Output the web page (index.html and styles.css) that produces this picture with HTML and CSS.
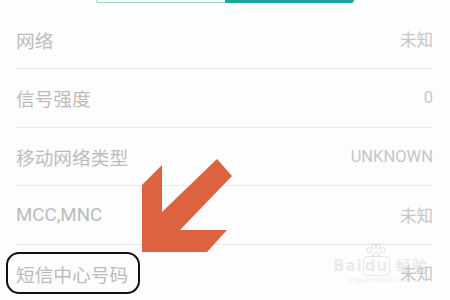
FILE: index.html
```html
<!DOCTYPE html>
<html lang="zh-CN">
<head>
<meta charset="utf-8">
<link rel="stylesheet" href="styles.css">
</head>
<body>
<div class="page">
  <div class="header">
    <div class="segment">
      <div class="seg seg-off"></div>
      <div class="seg seg-on"></div>
    </div>
  </div>
  <ul class="list">
    <li class="row"><span class="label">网络</span><span class="value">未知</span></li>
    <li class="row"><span class="label">信号强度</span><span class="value">0</span></li>
    <li class="row"><span class="label">移动网络类型</span><span class="value">UNKNOWN</span></li>
    <li class="row"><span class="label">MCC,MNC</span><span class="value">未知</span></li>
    <li class="row"><span class="label">短信中心号码</span><span class="value">未知</span></li>
  </ul>
  <svg class="arrow" width="450" height="300" viewBox="0 0 450 300">
    <polygon fill="#dc6240" points="217,159 232,176 180,230 227,230 207,252 142,252 142,185 162,165 162,212"/>
  </svg>
  <div class="circle-mark"></div>
  <div class="watermark">
    <svg class="wm-paw" width="22" height="14" viewBox="0 0 22 14">
      <g fill="none" stroke="rgba(190,190,190,0.45)" stroke-width="1">
        <ellipse cx="4" cy="7" rx="2" ry="2.5"/>
        <ellipse cx="8.5" cy="3" rx="2" ry="2.5"/>
        <ellipse cx="13.5" cy="3" rx="2" ry="2.5"/>
        <ellipse cx="18" cy="7" rx="2" ry="2.5"/>
        <path d="M7 13 Q11 6 15 13 Z"/>
      </g>
    </svg>
    <div class="wm-logo">Bai<span class="wm-du">du</span> 经验</div>
    <div class="wm-url">jingyan.baidu.com</div>
  </div>
</div>
</body>
</html>
```

FILE: styles.css
```css
html, body {
  margin: 0;
  padding: 0;
  background: #fdfdfd;
}
body {
  width: 450px;
  height: 300px;
  overflow: hidden;
  font-family: Roboto, "Noto Sans CJK SC", sans-serif;
}
.page {
  position: relative;
  width: 450px;
  height: 300px;
}
.header {
  height: 10.5px;
  display: flex;
  justify-content: center;
}
.segment {
  display: flex;
  width: 258px;
  height: 3px;
  margin-left: -1px;
}
.seg {
  flex: 1;
  height: 100%;
  box-sizing: border-box;
}
.seg-off {
  border: 1px solid #9fd6d3;
  border-top: none;
  border-right: none;
  border-radius: 0 0 0 6px;
  background: #ffffff;
}
.seg-on {
  background: #1aa8a0;
  border-radius: 0 0 6px 0;
}
.list {
  list-style: none;
  margin: 0;
  padding: 0 17px 0 16px;
}
.row {
  height: 57.5px;
  border-bottom: 1px solid #ebebeb;
  display: flex;
  align-items: center;
  justify-content: space-between;
  color: #bcbcbc;
}
.label {
  font-size: 18.7px;
}
.value {
  font-size: 16.5px;
  color: #c6c6c6;
}
.arrow {
  position: absolute;
  left: 0;
  top: 0;
}
.circle-mark {
  position: absolute;
  left: 6px;
  top: 252px;
  width: 134px;
  height: 42px;
  box-sizing: border-box;
  border: 2px solid #111;
  border-radius: 13px;
}
.watermark {
  position: absolute;
  left: 333px;
  top: 243px;
  color: rgba(200, 200, 200, 0.35);
  display: flex;
  flex-direction: column;
  align-items: center;
}
.wm-paw {
  display: block;
  margin-left: -10px;
}
.wm-logo {
  font-family: "DejaVu Sans", sans-serif;
  font-size: 15px;
  line-height: 18px;
  font-weight: bold;
  letter-spacing: 1px;
}
.wm-du {
  border: 1px solid rgba(200, 200, 200, 0.4);
  border-radius: 4px;
  padding: 0 1px;
}
.wm-url {
  font-family: "DejaVu Sans", sans-serif;
  font-size: 7px;
  line-height: 10px;
}
```
